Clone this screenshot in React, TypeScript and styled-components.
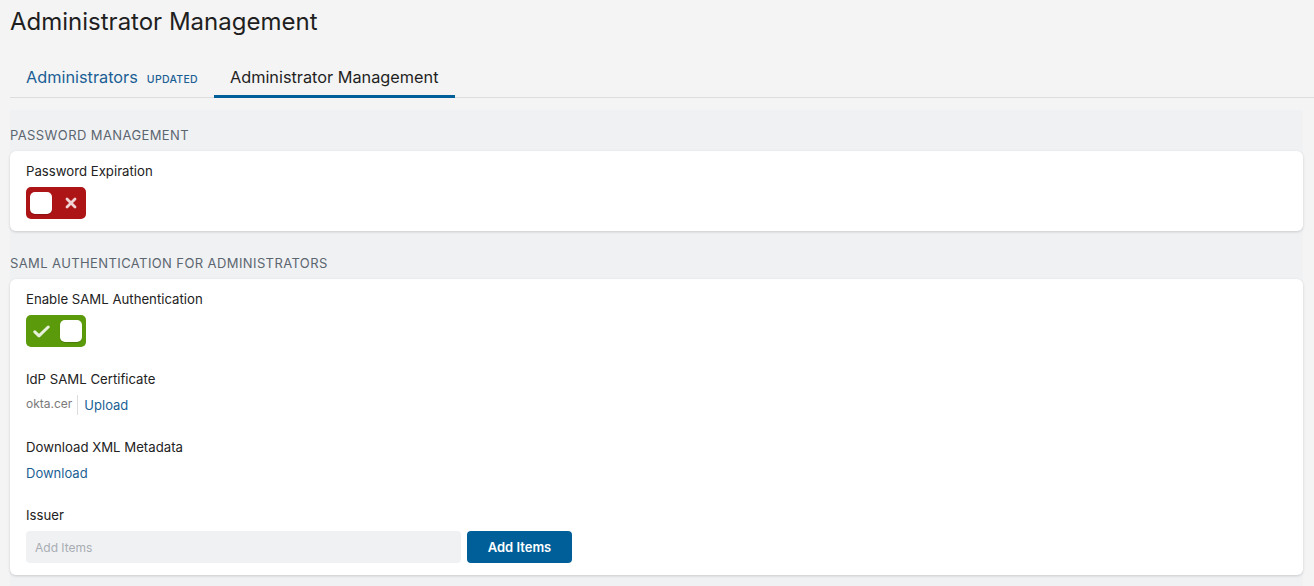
import React from "react";
import styled, { createGlobalStyle } from "styled-components";

const GlobalStyle = createGlobalStyle`
  html, body {
    margin: 0;
    padding: 0;
    background: #f4f4f4;
    font-family: Inter, "Noto Sans", Roboto, sans-serif;
    color: #222;
  }
  * { box-sizing: border-box; }
`;

const Page = styled.div`
  padding: 7px 11px 0 10px;
  display: flex;
  flex-direction: column;
`;

const Title = styled.h1`
  margin: 0;
  font-size: 24px;
  font-weight: 400;
  line-height: 30px;
  color: #1f1f1f;
`;

const TabBar = styled.div`
  display: flex;
  margin-top: 21px;
  border-bottom: 1px solid #dddddd;
  margin-right: -11px;
`;

const Tab = styled.div<{ $active?: boolean }>`
  display: flex;
  align-items: baseline;
  gap: 9px;
  padding: 9px 16px 5px;
  font-size: 16.3px;
  line-height: 20px;
  color: ${(p) => (p.$active ? "#1f1f1f" : "#1b5f94")};
  border-bottom: 3px solid ${(p) => (p.$active ? "#005f99" : "transparent")};
  margin-bottom: -1px;
`;

const Badge = styled.span`
  font-size: 10.5px;
  font-weight: 500;
  letter-spacing: 0.3px;
  color: #1b5f94;
`;

const SectionsArea = styled.div`
  margin-top: 12px;
  background: #f0f1f3;
  display: flex;
  flex-direction: column;
  gap: 7px;
  padding-bottom: 20px;
`;

const Section = styled.section`
  display: flex;
  flex-direction: column;
`;

const SectionHeader = styled.h2`
  margin: 0;
  padding: 17px 0 8px;
  font-size: 13px;
  font-weight: 400;
  line-height: 16px;
  letter-spacing: 0.4px;
  text-transform: uppercase;
  color: #5c6670;
`;

const Card = styled.div`
  background: #ffffff;
  border-radius: 6px;
  box-shadow: 0 1px 3px rgba(0, 0, 0, 0.16);
  padding: 12px 16px;
  display: flex;
  flex-direction: column;
  gap: 24px;
`;

const Field = styled.div`
  display: flex;
  flex-direction: column;
  gap: 8px;
  align-items: flex-start;
`;

const Label = styled.div`
  font-size: 13.2px;
  line-height: 16px;
  color: #222;
`;

const ToggleBox = styled.div<{ $on: boolean }>`
  width: 60px;
  height: 32px;
  border-radius: 5px;
  background: ${(p) => (p.$on ? "#5b9a0b" : "#ad1416")};
  display: flex;
  flex-direction: ${(p) => (p.$on ? "row-reverse" : "row")};
  align-items: center;
  justify-content: space-between;
  padding: 0 4px;
`;

const Knob = styled.div`
  width: 22px;
  height: 22px;
  border-radius: 5px;
  background: #ffffff;
  box-shadow: 0 1px 1px rgba(0, 0, 0, 0.2);
`;

const IconSlot = styled.div`
  width: 22px;
  display: flex;
  justify-content: center;
  align-items: center;
`;

const Toggle: React.FC<{ on: boolean }> = ({ on }) => (
  <ToggleBox $on={on}>
    <Knob />
    <IconSlot>
      {on ? (
        <svg width="17" height="13" viewBox="0 0 17 13">
          <path d="M1.8 6.8 L6 10.8 L15.2 2" stroke="rgba(255,255,255,0.85)" strokeWidth="3" fill="none" strokeLinecap="round" strokeLinejoin="round" />
        </svg>
      ) : (
        <svg width="12" height="12" viewBox="0 0 12 12">
          <path d="M2 2 L10 10 M10 2 L2 10" stroke="rgba(255,255,255,0.82)" strokeWidth="2.8" strokeLinecap="round" />
        </svg>
      )}
    </IconSlot>
  </ToggleBox>
);

const FileRow = styled.div`
  display: flex;
  align-items: center;
  height: 20px;
`;

const FileName = styled.span`
  font-size: 12px;
  line-height: 16px;
  color: #7a7a7a;
  padding-right: 5px;
  margin-top: -2px;
`;

const LinkText = styled.a<{ $divided?: boolean }>`
  font-size: 13px;
  line-height: 20px;
  color: #1b5f94;
  text-decoration: none;
  cursor: pointer;
  ${(p) => (p.$divided ? "border-left: 1px solid #dcdcdc; padding-left: 6px;" : "")}
`;

const InputRow = styled.div`
  display: flex;
  gap: 6px;
  align-items: center;
`;

const TextInput = styled.input`
  width: 435px;
  height: 32px;
  border: none;
  border-radius: 4px;
  background: #f0f1f3;
  padding: 0 9px;
  font-family: inherit;
  font-size: 12px;
  color: #333;
  outline: none;
  &::placeholder { color: #a8adb3; }
`;

const PrimaryButton = styled.button`
  width: 105px;
  height: 32px;
  border: none;
  border-radius: 4px;
  background: #005f99;
  color: #ffffff;
  font-family: inherit;
  font-size: 13px;
  font-weight: 600;
  cursor: pointer;
`;

export default function App() {
  return (
    <>
      <GlobalStyle />
      <Page>
        <Title>Administrator Management</Title>
        <TabBar>
          <Tab>
            Administrators <Badge>UPDATED</Badge>
          </Tab>
          <Tab $active>Administrator Management</Tab>
        </TabBar>
        <SectionsArea>
          <Section>
            <SectionHeader>Password Management</SectionHeader>
            <Card>
              <Field>
                <Label>Password Expiration</Label>
                <Toggle on={false} />
              </Field>
            </Card>
          </Section>
          <Section>
            <SectionHeader>SAML Authentication for Administrators</SectionHeader>
            <Card>
              <Field>
                <Label>Enable SAML Authentication</Label>
                <Toggle on={true} />
              </Field>
              <Field>
                <Label>IdP SAML Certificate</Label>
                <FileRow>
                  <FileName>okta.cer</FileName>
                  <LinkText $divided>Upload</LinkText>
                </FileRow>
              </Field>
              <Field>
                <Label>Download XML Metadata</Label>
                <FileRow>
                  <LinkText>Download</LinkText>
                </FileRow>
              </Field>
              <Field>
                <Label>Issuer</Label>
                <InputRow>
                  <TextInput placeholder="Add Items" />
                  <PrimaryButton>Add Items</PrimaryButton>
                </InputRow>
              </Field>
            </Card>
          </Section>
        </SectionsArea>
      </Page>
    </>
  );
}
